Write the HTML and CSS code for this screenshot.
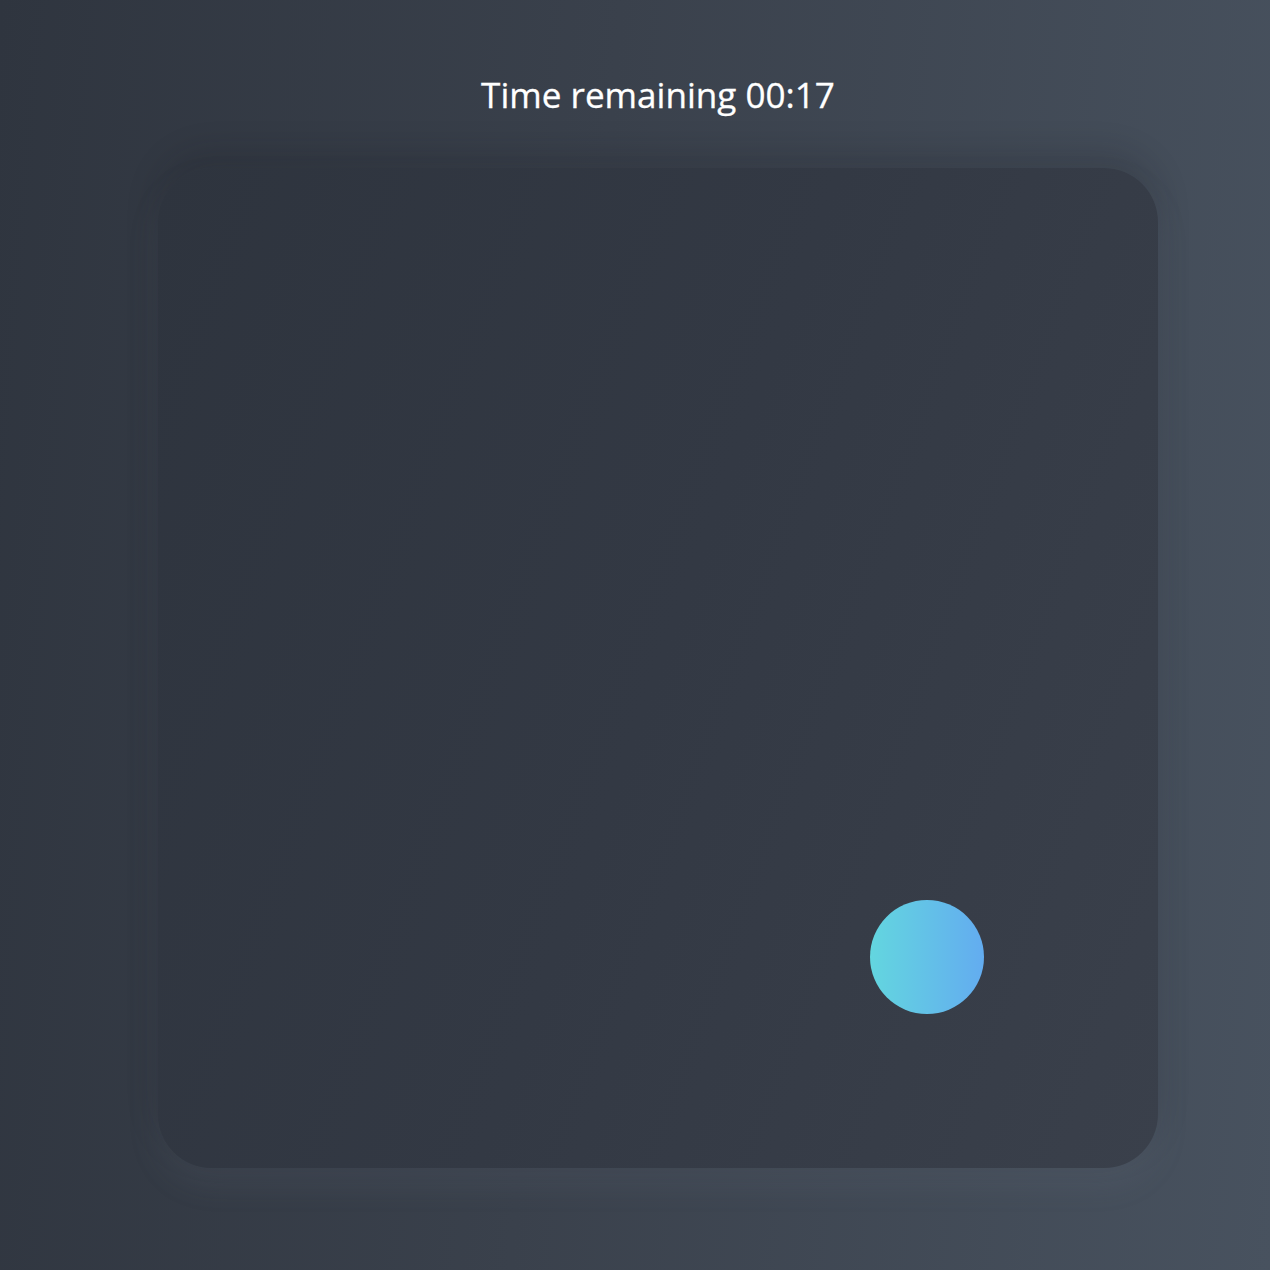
FILE: index.html
```html
<!DOCTYPE html>
<html>
<head>
<meta charset="utf-8">
<link rel="stylesheet" href="styles.css">
</head>
<body>
<main class="stage">
  <h1 class="timer">Time remaining 00:17</h1>
  <div class="board">
    <div class="ball"></div>
  </div>
</main>
</body>
</html>
```

FILE: styles.css
```css
html, body {
  margin: 0;
  padding: 0;
  height: 100%;
}
body {
  background: linear-gradient(95deg, #2f353f 0%, #3a414c 45%, #48525f 100%);
  font-family: "Open Sans", "Liberation Sans", sans-serif;
  color: #ffffff;
  min-height: 1270px;
}
.stage {
  width: 1000px;
  margin-left: 158px;
  padding-top: 72px;
}
.timer {
  margin: 0;
  font-size: 35.1px;
  font-weight: 400;
  line-height: 44px;
  text-align: center;
  -webkit-text-stroke: 0.3px #ffffff;
}
.board {
  position: relative;
  margin-top: 52px;
  width: 1000px;
  height: 1000px;
  border-radius: 54px;
  background: linear-gradient(110deg, #2e343e 0%, #333944 50%, #3a404b 100%);
  box-shadow: 0 -16px 32px rgba(20, 24, 30, 0.18), 0 16px 32px rgba(120, 130, 145, 0.12);
}
.ball {
  position: absolute;
  left: 712px;
  top: 732px;
  width: 114px;
  height: 114px;
  border-radius: 50%;
  background: linear-gradient(to right, #63d6df, #63acf0);
}
```
